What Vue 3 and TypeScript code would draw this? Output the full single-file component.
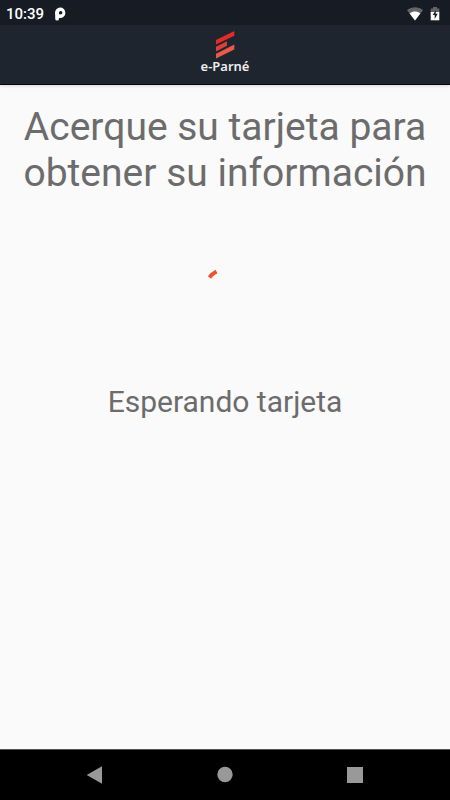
<script setup lang="ts">
import { ref } from 'vue'

const time = ref('10:39')
const title = 'Acerque su tarjeta para obtener su información'
const status = ref('Esperando tarjeta')
</script>

<template>
  <div class="screen">
    <div class="status-bar">
      <span class="clock">{{ time }}</span>
      <svg class="p-icon" width="12" height="14" viewBox="0 0 12 14" aria-hidden="true">
        <path fill="#fff" fill-rule="evenodd" d="M1 6a5.200 5.200 0 1 1 5.200 5H5v.7a1.900 1.900 0 0 1-3.800 0V8.200zM5 7.300h1.300a1.700 1.700 0 1 0-1.300-1.700z" />
      </svg>
      <span class="spacer"></span>
      <svg class="wifi" width="16" height="14" viewBox="0 0 16 14" aria-hidden="true">
        <path fill="#626469" d="M0 3.200C5-.6 11-.6 16 3.200L8 13.500z" />
        <path fill="#fff" d="M2.700 6.500c3.500-2.600 7.100-2.600 10.600 0L8 13.500z" />
      </svg>
      <svg class="battery" width="10" height="14" viewBox="0 0 10 14" aria-hidden="true">
        <path fill="#626469" d="M3 0h4v1.500h2.300V6H.7V1.500H3z" />
        <path fill="#fff" d="M.7 5h8.600v8.300H.7z" />
        <path fill="#161b24" d="M6 3 2.700 8h2v4l3-5.200H5.600z" />
      </svg>
    </div>

    <header class="app-bar">
      <svg class="logo-mark" width="20" height="29" viewBox="0 0 20 29" aria-hidden="true">
        <path fill="#e02d28" d="M1 9.900 19.300 1v4.700L1 14.600z" />
        <path fill="#dc4038" d="M1 16.800 12 11.300v4.400L1 21.500z" />
        <path fill="#e95a48" d="M1 23.700 19.300 14.500v5L1 28.600z" />
      </svg>
      <span class="logo-name">e-Parné</span>
    </header>

    <main class="content">
      <h1>{{ title }}</h1>
      <svg class="spinner" width="48" height="48" viewBox="0 0 48 48" role="progressbar" aria-label="Cargando">
        <path d="M8.500 13.500A19 19 0 0 1 15.500 7.500" fill="none" stroke="#f0502f" stroke-width="4" />
      </svg>
      <p class="status" role="status">{{ status }}</p>
    </main>

    <nav class="nav-bar">
      <button type="button" aria-label="Atrás">
        <svg width="18" height="18" viewBox="0 0 18 18"><path d="M.7 9 16 .2v17.600z" /></svg>
      </button>
      <button type="button" aria-label="Inicio">
        <svg width="18" height="18" viewBox="0 0 18 18"><circle cx="9" cy="8.500" r="7.700" /></svg>
      </button>
      <button type="button" aria-label="Recientes">
        <svg width="18" height="18" viewBox="0 0 18 18"><path d="M1 1h16v16H1z" /></svg>
      </button>
    </nav>
  </div>
</template>

<style>
body {
  margin: 0;
  background: #fafafa;
}
</style>

<style scoped>
.screen {
  display: flex;
  flex-direction: column;
  min-height: 100vh;
  background: #fafafa;
  color: #6c6c6c;
  font-family: Roboto, "Noto Sans", sans-serif;
}

.status-bar {
  display: flex;
  align-items: center;
  box-sizing: border-box;
  height: 25px;
  padding: 2px 10px 0 6px;
  background: #161b24;
  color: #fff;
}

.clock {
  font-size: 15px;
  font-weight: 500;
  line-height: 20px;
}

.p-icon {
  margin-left: 10px;
}

.spacer {
  flex: 1;
}

.battery {
  margin-left: 7px;
}

.app-bar {
  display: flex;
  flex-direction: column;
  align-items: center;
  box-sizing: border-box;
  height: 60px;
  padding-top: 5px;
  background: #1e252f;
  border-bottom: 1px solid #05070a;
  box-shadow: 0 1px 3px rgba(0, 0, 0, 0.15);
}

.logo-name {
  color: #eee;
  font-family: "Noto Sans", sans-serif;
  font-size: 13px;
  font-weight: 600;
  line-height: 14px;
}

.content {
  flex: 1;
  display: flex;
  flex-direction: column;
  align-items: center;
  padding: 19px 16px 0;
  text-align: center;
}

h1 {
  margin: 0;
  font-size: 39px;
  font-weight: 400;
  line-height: 46px;
}

.spinner {
  margin-top: 68px;
}

.status {
  margin: 72px 0 0;
  font-size: 30px;
  line-height: 36px;
}

.nav-bar {
  display: flex;
  justify-content: center;
  gap: 82px;
  box-sizing: border-box;
  height: 51px;
  background: #000;
  border-top: 1px solid #555;
}

.nav-bar button {
  display: flex;
  align-items: center;
  justify-content: center;
  width: 48px;
  padding: 0;
  border: 0;
  background: none;
}

.nav-bar svg {
  fill: #999;
}
</style>
